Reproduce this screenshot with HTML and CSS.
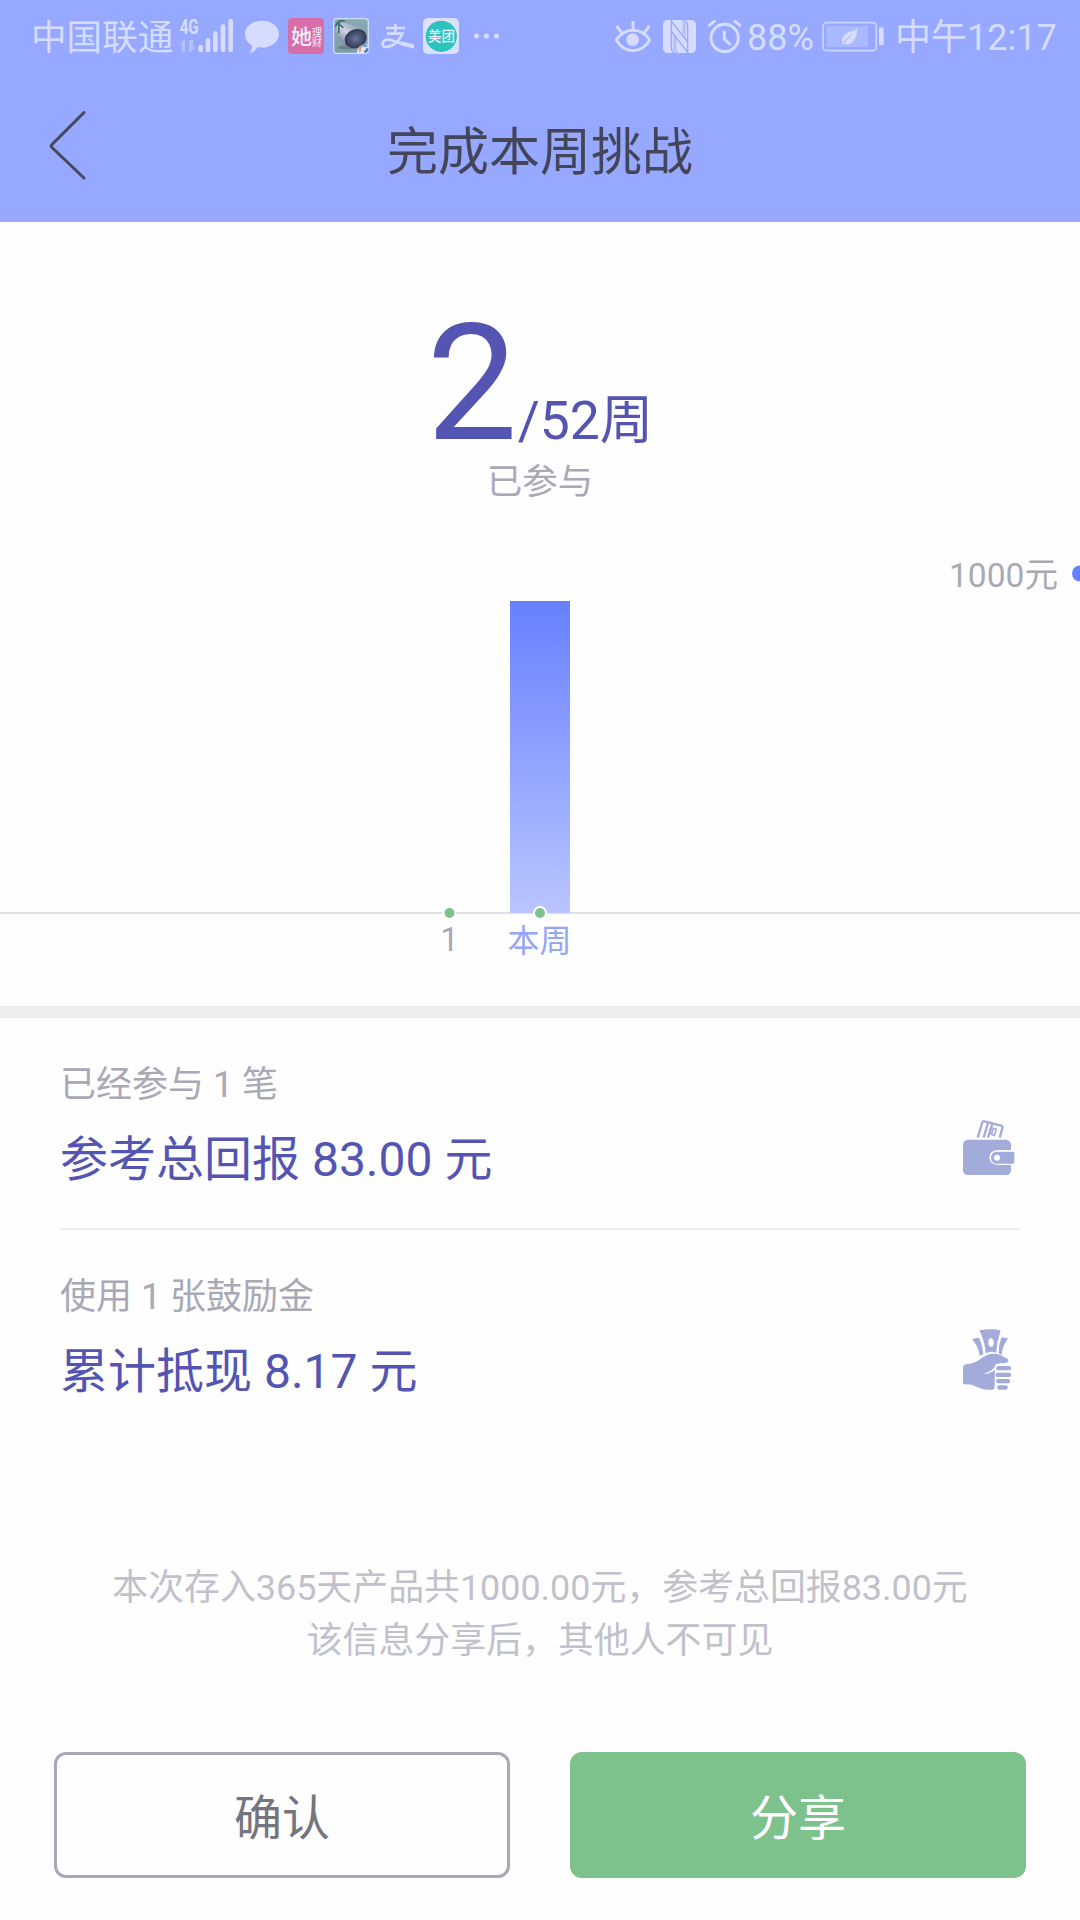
FILE: index.html
```html
<!DOCTYPE html>
<html lang="zh-CN">
<head>
<meta charset="utf-8">
<title>完成本周挑战</title>
<link rel="stylesheet" href="styles.css">
</head>
<body>
<header class="top">
  <div class="status">
    <div class="status-left">
      <span class="carrier">中国联通</span>
      <svg class="signal" viewBox="537 54 168 108">
        <text x="539" y="101" class="net" textLength="57" lengthAdjust="spacingAndGlyphs">4G</text>
        <path class="dim" d="M550 120l-11 13h7v22h9v-35zM567 120v35h5l15-15h-8v-20z"/>
        <path class="bars" d="M602 141v9M624 121v29M646 101v49M669 80v70M692 63v87"/>
      </svg>
      <svg class="bubble" viewBox="9 54 114 108"><path d="M66 62c29 0 51 17 51 40s-22 41-51 41c-6 0-9-1-13-1-6 9-13 15-20 16-3 0-3-2-1-4 3-5 5-11 3-18-13-8-20-20-20-34 0-23 22-40 51-40z"/></svg>
      <svg class="app app-she" viewBox="0 0 36 36"><rect width="36" height="36" rx="4" fill="#d86ea8"/><text x="3" y="26" font-size="21" font-weight="500">她</text><text x="24" y="17.500" font-size="10">理</text><text x="24" y="27.500" font-size="10">财</text></svg>
      <svg class="app app-game" viewBox="278 54 108 108">
        <defs>
          <linearGradient id="gbg" x1="0" y1="0" x2="0" y2="1"><stop offset="0" stop-color="#8aa9b4"/><stop offset="1" stop-color="#7b9ea8"/></linearGradient>
          <linearGradient id="gbody" x1="0" y1="1" x2="1" y2="0"><stop offset="0" stop-color="#49526f"/><stop offset=".5" stop-color="#d0d3e8"/><stop offset="1" stop-color="#747d9e"/></linearGradient>
          <radialGradient id="gend"><stop offset="0" stop-color="#66749a"/><stop offset="1" stop-color="#303854"/></radialGradient>
        </defs>
        <rect x="280" y="56" width="104" height="104" rx="10" fill="url(#gbg)" stroke="#d2defa" stroke-width="4"/>
        <ellipse cx="325" cy="142" rx="34" ry="6" fill="#66838f"/>
        <path d="M288 85c3-16 24-20 42-12l42 18-44 52c-16-4-25-18-34-31-7-9-9-19-6-27z" fill="url(#gbody)"/>
        <ellipse cx="346" cy="116" rx="34" ry="28" transform="rotate(-22 346 116)" fill="url(#gend)"/>
        <path d="M286 78c6-14 16-18 26-15M291 69l17 13M296 66l-1 32" fill="none" stroke="#406f70" stroke-width="5" stroke-linecap="round"/>
        <path d="M350 160c0-17 10-27 34-27v15q0 12-12 12z" fill="#e3e7fb"/>
        <path d="M360 155a13 13 0 0 1 5-17" fill="none" stroke="#dba25e" stroke-width="7"/>
        <path d="M366 138a13 13 0 0 1 14 2" fill="none" stroke="#739bdc" stroke-width="7"/>
        <path d="M381 145q0 9-9 11" fill="none" stroke="#4a77bd" stroke-width="7"/>
      </svg>
      <svg class="app app-pay" viewBox="417 54 108 108"><path d="M466 72v28M438 84h57M441 101h46q-7 17-19 27c-15 14-42 19-40 2 2-13 20-14 38-5q25 12 55 16" fill="none" stroke="#d5dcff" stroke-width="8"/><path d="M480 124l42 9v13l-34-10z"/></svg>
      <svg class="app app-food" viewBox="0 0 36 36"><rect width="36" height="36" rx="5" fill="#dbe1fb"/><circle cx="18.3" cy="18.3" r="15.6" fill="#2cc3bc"/><text x="5" y="23.400" font-size="13.500" font-weight="500">美团</text></svg>
      <svg class="more" viewBox="0 0 28 36"><circle cx="3.5" cy="18" r="2.6"/><circle cx="13.5" cy="18" r="2.6"/><circle cx="23.5" cy="18" r="2.6"/></svg>
    </div>
    <div class="status-right">
      <svg class="eye" viewBox="45 54 114 108"><path d="M52 120q19-29 50-29t50 29q-19 32-50 32t-50-32zM102 88V67M65 94L55 81M139 94l10-13" fill="none" stroke="#d5dcff" stroke-width="9" stroke-linecap="round" stroke-linejoin="round"/><circle cx="101" cy="119" r="19"/></svg>
      <svg class="nfc" viewBox="192 54 99 108">
        <rect x="192" y="60" width="99" height="99" rx="14"/>
        <path d="M217 60v83q1 12 9 16M217 64l49 62M222 90l0 0M266 159V76q-1-11-9-16M266 157l-48-62" fill="none" stroke="#96a8ff" stroke-width="4"/>
        <path d="M223 102l9 11v33q0 9 6 13h-6q-9-3-9-14zM260 114l-9-11V73q0-9-6-13h6q9 3 9 14z" fill="#96a8ff" opacity=".55"/>
      </svg>
      <svg class="alarm" viewBox="327 54 102 108"><circle cx="377" cy="114" r="41" fill="none" stroke="#d5dcff" stroke-width="9"/><path d="M376 95v22l16 15M331 76l15-12M423 76l-15-12" fill="none" stroke="#d5dcff" stroke-width="9" stroke-linecap="round"/></svg>
      <span class="percent">88%</span>
      <svg class="battery" viewBox="669 54 186 108"><rect x="672" y="68" width="160" height="84" rx="11" fill="none" stroke="#ccd5ff" stroke-width="5"/><rect x="682" y="78" width="125" height="63" fill="#a9b8ff"/><rect x="840" y="82" width="14" height="54" rx="5"/><path d="M776 85c-3 31-15 50-33 49-7-1-7-4-11 1l-3-3c-2-26 15-34 28-38q13-3 19-9z"/><path d="M731 134q9-16 25-29" fill="none" stroke="#9eafff" stroke-width="3"/></svg>
      <span class="clock">中午12:17</span>
    </div>
  </div>
  <nav class="nav">
    <svg class="back" viewBox="0 0 40 72"><path d="M36 3.500L4 35.500q-1.500 1.500 0 3L36 69"/></svg>
    <h1 class="title">完成本周挑战</h1>
  </nav>
</header>

<main>
  <section class="progress">
    <p class="weeks"><span class="done">2</span><span class="total">/52周</span></p>
    <p class="joined">已参与</p>
    <svg class="chart" viewBox="0 510 1080 496">
      <defs><linearGradient id="bar" x1="0" y1="0" x2="0" y2="1"><stop offset="0" stop-color="#6680ff"/><stop offset="1" stop-color="#bac5ff"/></linearGradient></defs>
      <text x="949" y="586.500" class="amount">1000元</text>
      <circle cx="1080" cy="573.500" r="8" fill="#6680ff"/>
      <rect y="912" width="1080" height="2" fill="#e1e1e1"/>
      <rect x="510" y="601" width="60" height="312" fill="url(#bar)"/>
      <g class="dots"><circle cx="449.500" cy="913" r="6"/><circle cx="540" cy="913" r="6"/></g>
      <text x="449.500" y="951" class="week">1</text>
      <text x="539.500" y="952" class="week current">本周</text>
    </svg>
  </section>

  <section class="summary">
    <div class="row">
      <div>
        <p class="label">已经参与 1 笔</p>
        <p class="value">参考总回报 83.00 元</p>
      </div>
      <svg class="icon wallet" viewBox="66 56 162 171">
        <path d="M113 112l14-46q2-5 7-3l49 13q5 2 4 7l-8 29" class="line"/>
        <path d="M131 112l13-44M144 112l13-42" class="line"/>
        <path d="M160 84l9 3-6 18-9-3z" class="line thin"/>
        <path d="M85 118h112q16 1 16 16v15h-40q-25 2-25 22t25 23h40v15q0 15-16 15H85q-16 0-16-15v-75q0-15 16-16z"/>
        <path d="M173 154h45q5 0 5 5v26q0 5-5 5h-45c-13 0-20-7-20-18s7-18 20-18z"/>
        <circle cx="171" cy="172" r="9" fill="#fff"/>
      </svg>
    </div>
    <div class="row">
      <div>
        <p class="label">使用 1 张鼓励金</p>
        <p class="value">累计抵现 8.17 元</p>
      </div>
      <svg class="icon cash" viewBox="66 55 150 185">
        <path d="M118 58q34-5 64 0-12 34-13 68-16-7-32 2-2-37-19-70z"/>
        <ellipse cx="153" cy="95" rx="8" ry="13" fill="#fff"/>
        <path d="M96 86q13-5 22-4 10 22 12 48l-11 5q-3-29-23-49zM204 83q-12-4-20-3-9 23-8 47l9 5q2-27 19-49z"/>
        <path d="M69 171q0-10 10-11 24-1 41-15c19-15 37-21 60-13l19 10q9 5 5 11-4 5-15 4-23-1-24 8l-1 65q-1 7-8 7-28 1-50-11-15-7-29-5-8 1-8-8z"/>
        <path d="M129 188q24-3 37-22l-1 10q-15 15-36 12z" fill="#fff"/>
        <path class="fingers" d="M175 172h32M173 192h34M175 211h29M178 230h19"/>
      </svg>
    </div>
  </section>

  <p class="note">本次存入365天产品共1000.00元，参考总回报83.00元<br>该信息分享后，其他人不可见</p>

  <div class="actions">
    <button class="btn confirm">确认</button>
    <button class="btn share">分享</button>
  </div>
</main>
</body>
</html>
```

FILE: styles.css
```css
* { box-sizing: border-box; }

body {
  margin: 0;
  width: 1080px;
  height: 1920px;
  overflow: hidden;
  background: #fefefe;
  font-family: Roboto, "Noto Sans CJK SC", sans-serif;
}

p, h1 { margin: 0; font-weight: 400; }
svg { display: block; flex: none; overflow: visible; }

.top { height: 222px; background: #96a8ff; }

/* Status bar */
.status {
  height: 72px;
  padding: 0 26px 0 31px;
  display: flex;
  justify-content: space-between;
  align-items: center;
  color: #d5dcff;
  font-size: 36px;
  line-height: 76px;
  white-space: nowrap;
}
.status svg { height: 36px; fill: #d5dcff; }
.status-left, .status-right { display: flex; align-items: center; }
.carrier { width: 145px; height: 72px; font-size: 35.6px; }
.signal { width: 56px; margin-left: 3px; }
.net { font: 700 60px Roboto, sans-serif; }
.dim { fill: #b3c1ff; }
.bars { stroke: #d5dcff; stroke-width: 14px; stroke-linecap: round; }
.bubble { width: 38px; margin-left: 8px; }
.app { width: 36px; }
.app text { fill: #f0effd; }
.app-she { margin-left: 7px; }
.app-game { margin-left: 9px; }
.app-pay { margin-left: 10px; }
.app-food { margin-left: 8px; }
.more { width: 28px; margin-left: 14px; }
.eye { width: 38px; }
.nfc { width: 33px; margin-left: 11px; }
.alarm { width: 34px; margin-left: 12px; }
.percent { width: 67px; margin-left: 5px; height: 72px; }
.battery { width: 62px; margin-left: 8px; }
.clock { width: 159px; margin-left: 11px; height: 72px; }

/* Title bar */
.nav {
  height: 150px;
  padding: 0 48px;
  display: grid;
  grid-template-columns: 40px 1fr 40px;
  align-items: center;
}
.back {
  width: 40px;
  height: 72px;
  margin-top: -4px;
  fill: none;
  stroke: #47475c;
  stroke-width: 3px;
  stroke-linecap: round;
}
.title {
  padding-top: 12px;
  color: #45455a;
  font-size: 51px;
  line-height: 60px;
  text-align: center;
}

/* Weekly progress */
.progress {
  height: 796px;
  padding-top: 67px;
  border-bottom: 12px solid #ededed;
  text-align: center;
}
.weeks {
  height: 165px;
  display: flex;
  justify-content: center;
  align-items: baseline;
  color: #5454b2;
}
.done { font-size: 162px; line-height: 190px; }
.total { font-size: 53.5px; line-height: 60px; }
.joined { height: 56px; color: #a9a9b5; font-size: 35.5px; line-height: 56px; }
.chart { width: 1080px; height: 496px; }
.amount { font-size: 33.6px; fill: #a9a9b5; }
.dots { fill: #7dc18d; stroke: #fff; stroke-width: 2px; }
.week { font-size: 33px; fill: #a9a9b5; text-anchor: middle; }
.current { font-size: 32px; fill: #94a6f4; }

/* Totals */
.summary { padding: 0 60px; }
.row {
  height: 212px;
  padding: 45px 0 0;
  display: flex;
  justify-content: space-between;
}
.row:first-child { border-bottom: 2px solid #ededed; }
.label { color: #a9a9b5; font-size: 36px; line-height: 44px; }
.value { margin-top: 23px; color: #5454b2; font-size: 48px; line-height: 60px; }
.icon { fill: #a2abd9; }
.wallet { width: 54px; height: 57px; margin: 56px 4px 0 0; }
.cash { width: 50px; height: 62px; margin: 54px 8px 0 0; }
.line { fill: none; stroke: #a2abd9; stroke-width: 7px; }
.thin { stroke-width: 5px; }
.fingers { stroke: #a2abd9; stroke-width: 13px; stroke-linecap: round; }

.note {
  margin-top: 120px;
  color: #c1c1cc;
  font-size: 35.9px;
  line-height: 53px;
  text-align: center;
}

/* Buttons */
.actions { display: flex; gap: 60px; margin-top: 84px; padding: 0 54px; }
.btn {
  flex: 1;
  height: 126px;
  padding: 0 0 2px;
  border: 3px solid #a9a9b5;
  border-radius: 12px;
  background: transparent;
  color: #75757f;
  font: 400 48px Roboto, "Noto Sans CJK SC", sans-serif;
}
.share { border-color: #7dc18d; background: #7dc18d; color: #fff; }
```
